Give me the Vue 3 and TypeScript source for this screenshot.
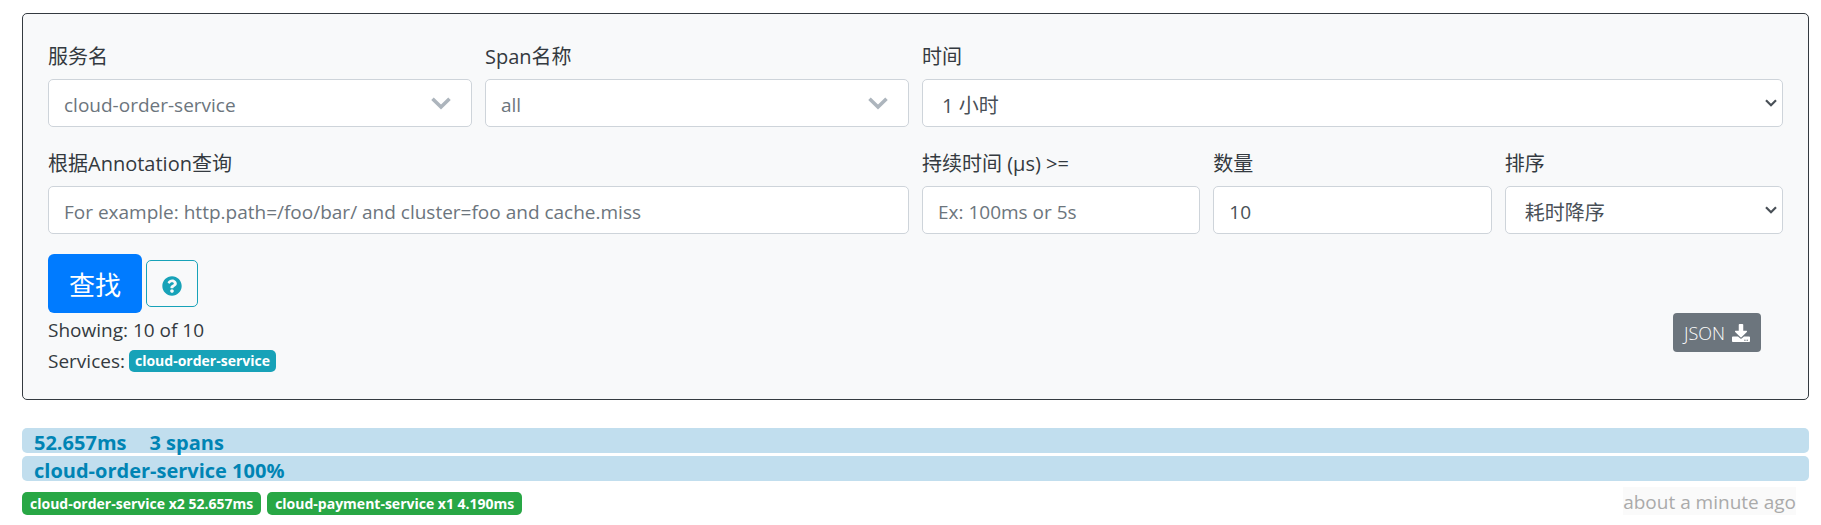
<script setup lang="ts">
import { ref } from 'vue'

interface TraceService {
  name: string
  count: number
  duration: string
}

interface Trace {
  duration: string
  spans: number
  service: string
  percent: number
  services: TraceService[]
  age: string
}

const serviceName = ref('cloud-order-service')
const spanName = ref('all')
const lookback = ref('1h')
const annotation = ref('')
const minDuration = ref('')
const limit = ref('10')
const sortOrder = ref('duration-desc')

const foundServices: string[] = ['cloud-order-service']

const traces: Trace[] = [
  {
    duration: '52.657ms',
    spans: 3,
    service: 'cloud-order-service',
    percent: 100,
    services: [
      { name: 'cloud-order-service', count: 2, duration: '52.657ms' },
      { name: 'cloud-payment-service', count: 1, duration: '4.190ms' },
    ],
    age: 'about a minute ago',
  },
]
</script>

<template>
  <main class="page">
    <form class="search" @submit.prevent>
      <div class="grid">
        <div class="field w3">
          <label for="service">服务名</label>
          <div class="pick">
            <select id="service" v-model="serviceName" class="control muted">
              <option value="cloud-order-service">cloud-order-service</option>
            </select>
            <svg class="chevron" viewBox="0 0 20 13" aria-hidden="true">
              <path d="M1.5 1.8 10 10 18.5 1.8" fill="none" stroke="#adb5bd" stroke-width="3.6" />
            </svg>
          </div>
        </div>
        <div class="field w3">
          <label for="span">Span名称</label>
          <div class="pick">
            <select id="span" v-model="spanName" class="control muted">
              <option value="all">all</option>
            </select>
            <svg class="chevron" viewBox="0 0 20 13" aria-hidden="true">
              <path d="M1.5 1.8 10 10 18.5 1.8" fill="none" stroke="#adb5bd" stroke-width="3.6" />
            </svg>
          </div>
        </div>
        <div class="field w6">
          <label for="lookback">时间</label>
          <div class="pick">
            <select id="lookback" v-model="lookback" class="control native">
              <option value="1h">1 小时</option>
            </select>
            <svg class="caret" viewBox="0 0 12 8" aria-hidden="true">
              <path d="M1 1.2 6 6.2 11 1.2" fill="none" stroke="#495057" stroke-width="2.2" />
            </svg>
          </div>
        </div>
        <div class="field w6">
          <label for="annotation">根据Annotation查询</label>
          <input
            id="annotation"
            v-model="annotation"
            class="control"
            type="text"
            placeholder="For example: http.path=/foo/bar/ and cluster=foo and cache.miss"
          />
        </div>
        <div class="field w2">
          <label for="duration">持续时间 (μs) &gt;=</label>
          <input id="duration" v-model="minDuration" class="control" type="text" placeholder="Ex: 100ms or 5s" />
        </div>
        <div class="field w2">
          <label for="limit">数量</label>
          <input id="limit" v-model="limit" class="control" type="text" />
        </div>
        <div class="field w2">
          <label for="sort">排序</label>
          <div class="pick">
            <select id="sort" v-model="sortOrder" class="control native">
              <option value="duration-desc">耗时降序</option>
            </select>
            <svg class="caret" viewBox="0 0 12 8" aria-hidden="true">
              <path d="M1 1.2 6 6.2 11 1.2" fill="none" stroke="#495057" stroke-width="2.2" />
            </svg>
          </div>
        </div>
      </div>

      <div class="actions">
        <button class="find" type="submit">查找</button>
        <button class="help" type="button" aria-label="Help">
          <svg viewBox="0 0 512 512" aria-hidden="true">
            <path
              fill="currentColor"
              d="M504 256c0 136.997-111.043 248-248 248S8 392.997 8 256C8 119.083 119.043 8 256 8s248 111.083 248 248zM262.655 90c-54.497 0-89.255 22.957-116.549 63.758-3.536 5.286-2.353 12.415 2.715 16.258l34.699 26.31c5.205 3.947 12.621 3.008 16.665-2.122 17.864-22.658 30.113-35.797 57.303-35.797 20.429 0 45.698 13.148 45.698 32.958 0 14.976-12.363 22.667-32.534 33.976C247.128 238.528 216 254.941 216 296v4c0 6.627 5.373 12 12 12h56c6.627 0 12-5.373 12-12v-1.333c0-28.462 83.186-29.647 83.186-106.667 0-58.002-60.165-102-116.531-102zM256 338c-25.365 0-46 20.635-46 46 0 25.364 20.635 46 46 46s46-20.636 46-46c0-25.365-20.635-46-46-46z"
            />
          </svg>
        </button>
      </div>

      <div class="summary">
        <div class="totals">
          <div>Showing: 10 of 10</div>
          <div class="found">
            <span>Services:</span>
            <span v-for="name in foundServices" :key="name" class="badge info">{{ name }}</span>
          </div>
        </div>
        <button class="json" type="button">
          JSON
          <svg viewBox="0 0 512 512" aria-hidden="true">
            <path
              fill="currentColor"
              d="M216 0h80c13.3 0 24 10.7 24 24v168h87.700c17.800 0 26.700 21.500 14.100 34.100L269.700 378.300c-7.500 7.500-19.800 7.500-27.300 0L90.100 226.100c-12.600-12.600-3.700-34.100 14.100-34.100H192V24c0-13.300 10.700-24 24-24zm296 376v112c0 13.300-10.700 24-24 24H24c-13.300 0-24-10.700-24-24V376c0-13.300 10.700-24 24-24h146.700l49 49c20.100 20.100 52.500 20.100 72.600 0l49-49H488c13.300 0 24 10.700 24 24zm-124 88c0-11-9-20-20-20s-20 9-20 20 9 20 20 20 20-9 20-20zm64 0c0-11-9-20-20-20s-20 9-20 20 9 20 20 20 20-9 20-20z"
            />
          </svg>
        </button>
      </div>
    </form>

    <article v-for="trace in traces" :key="trace.age" class="trace">
      <div class="bar">
        <span>{{ trace.duration }}</span>
        <span>{{ trace.spans }} spans</span>
      </div>
      <div class="bar" :style="{ width: trace.percent + '%' }">{{ trace.service }} {{ trace.percent }}%</div>
      <div class="footer">
        <span v-for="item in trace.services" :key="item.name" class="badge success">
          {{ item.name }} x{{ item.count }} {{ item.duration }}
        </span>
        <span class="age">{{ trace.age }}</span>
      </div>
    </article>
  </main>
</template>

<style>
body {
  margin: 0;
  background: #fff;
}
</style>

<style scoped>
.page,
.page * {
  box-sizing: border-box;
}

.page {
  padding: 13px 12px 0 22px;
  color: #343a40;
  font-family: "Open Sans", "Noto Sans CJK SC", sans-serif;
  font-size: 19px;
  line-height: 30px;
}

button,
input,
select {
  margin: 0;
  font-family: inherit;
}

.search {
  padding: 28px 25px 23px;
  border: 1px solid #343a40;
  border-radius: 5px;
  background: #f8f9fa;
}

.grid {
  display: grid;
  grid-template-columns: repeat(12, 1fr);
  gap: 22px 13px;
}

.field {
  display: flex;
  flex-direction: column;
  gap: 7px;
  min-width: 0;
}

.field label {
  font-size: 20px;
}

.w2 {
  grid-column: span 2;
}

.w3 {
  grid-column: span 3;
}

.w6 {
  grid-column: span 6;
}

.pick {
  position: relative;
}

.control {
  display: block;
  width: 100%;
  height: 48px;
  padding: 4px 15px 0;
  border: 1px solid #ced4da;
  border-radius: 5px;
  background: #fff;
  color: #495057;
  font-size: 19px;
  appearance: none;
}

.control::placeholder {
  color: #6c757d;
  opacity: 1;
}

.control.muted {
  color: #6c757d;
}

.control.native {
  padding-left: 19px;
  font-size: 20px;
}

.chevron {
  position: absolute;
  top: 18px;
  right: 21px;
  width: 20px;
  height: 13px;
}

.caret {
  position: absolute;
  top: 20px;
  right: 6px;
  width: 12px;
  height: 8px;
}

.actions {
  display: flex;
  align-items: center;
  gap: 4px;
  margin-top: 20px;
}

.find {
  height: 59px;
  padding: 0 21px;
  border: 0;
  border-radius: 6px;
  background: #007bff;
  color: #fff;
  font-size: 26px;
}

.help {
  display: flex;
  align-items: center;
  justify-content: center;
  width: 52px;
  height: 47px;
  padding: 4px 0 0;
  border: 1px solid #17a2b8;
  border-radius: 5px;
  background: transparent;
  color: #17a2b8;
}

.help svg {
  width: 20px;
  height: 20px;
}

.summary {
  display: flex;
  align-items: flex-start;
  justify-content: space-between;
  padding: 0 22px 0 0;
}

.totals {
  padding-top: 2px;
}

.found {
  display: flex;
  align-items: center;
  gap: 4px;
  padding-top: 1px;
}

.badge {
  padding: 0 6px;
  border-radius: 5px;
  color: #fff;
  font-size: 14px;
  font-weight: 700;
  line-height: 22px;
  white-space: nowrap;
}

.info {
  background: #17a2b8;
}

.success {
  padding: 0 8px;
  background: #28a745;
  line-height: 23px;
}

.json {
  display: flex;
  align-items: center;
  gap: 7px;
  height: 39px;
  padding: 0 11px;
  border: 0;
  border-radius: 4px;
  background: #6c757d;
  color: #fff;
  font-size: 18px;
  font-weight: 300;
}

.json svg {
  width: 18px;
  height: 18px;
}

.trace {
  display: flex;
  flex-direction: column;
  gap: 3px;
  margin-top: 28px;
}

.bar {
  display: flex;
  gap: 23px;
  height: 25px;
  padding-left: 12px;
  border-radius: 5px;
  background: #c1deee;
  color: #0084b4;
  font-size: 20px;
  font-weight: 700;
}

.footer {
  display: flex;
  align-items: flex-end;
  gap: 6px;
  padding: 3px 13px 0 0;
}

.age {
  margin-left: auto;
  padding-top: 2px;
  background: #fafafa;
  color: #aaa;
  line-height: 26px;
}
</style>
